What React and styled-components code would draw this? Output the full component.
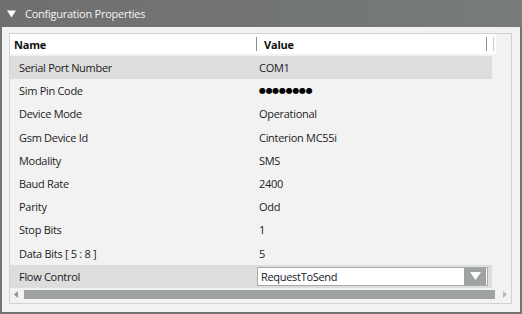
import React from 'react';
import styled, { createGlobalStyle } from 'styled-components';

const GlobalStyle = createGlobalStyle`
   html, body {
      margin: 0;
      padding: 0;
      background: #ffffff;
   }
   body {
      font-family: "Open Sans", "Noto Sans", sans-serif;
   }
`;

const properties = [
   { name: 'Serial Port Number', value: 'COM1', selected: true },
   { name: 'Sim Pin Code', value: '●●●●●●●●', secret: true },
   { name: 'Device Mode', value: 'Operational' },
   { name: 'Gsm Device Id', value: 'Cinterion MC55i' },
   { name: 'Modality', value: 'SMS' },
   { name: 'Baud Rate', value: '2400' },
   { name: 'Parity', value: 'Odd' },
   { name: 'Stop Bits', value: '1' },
   { name: 'Data Bits [ 5 : 8 ]', value: '5' },
   { name: 'Flow Control', value: 'RequestToSend', selected: true, combo: true },
];

const App = () => {
   return (
      <>
         <GlobalStyle />
         <Window>
            <TitleBar>
               <Caret viewBox="0 0 10 8">
                  <path d="M0 0 H10 L5 8 Z" fill="#ffffff" />
               </Caret>
               <Title>Configuration Properties</Title>
            </TitleBar>

            <Body>
               <Panel>
                  <HeaderRow>
                     <HeaderCell width="246px" pad="4px">Name</HeaderCell>
                     <Divider />
                     <HeaderCell width="229px" pad="7px">Value</HeaderCell>
                     <Divider />
                     <HeaderGap />
                     <Divider light />
                  </HeaderRow>

                  <Rows>
                     {properties.map((p) => (
                        <Row key={p.name} selected={p.selected}>
                           <NameCell>{p.name}</NameCell>
                           <ValueCell secret={p.secret}>
                              {p.combo ? (
                                 <Combo>
                                    <ComboText>{p.value}</ComboText>
                                    <ComboButton>
                                       <svg width="11" height="8" viewBox="0 0 11 8">
                                          <path d="M0 0 H11 L5.5 8 Z" fill="#ffffff" />
                                       </svg>
                                    </ComboButton>
                                 </Combo>
                              ) : (
                                 p.value
                              )}
                           </ValueCell>
                        </Row>
                     ))}
                  </Rows>

                  <ScrollBar>
                     <Arrow viewBox="0 0 4 7">
                        <path d="M4 0 V7 L0 3.5 Z" fill="#8f9394" />
                     </Arrow>
                     <Thumb />
                     <Arrow viewBox="0 0 4 7">
                        <path d="M0 0 V7 L4 3.5 Z" fill="#b4b7b8" />
                     </Arrow>
                  </ScrollBar>
               </Panel>
            </Body>
         </Window>
      </>
   );
};

export default App;

const Window = styled.div`
   width: 522px;
   height: 314px;
   box-sizing: border-box;
   display: flex;
   flex-direction: column;
   background: #f2f2f2;
   border: 2px solid #727474;
   border-top: none;
`;

const TitleBar = styled.div`
   height: 27px;
   margin: 0 -2px;
   flex-shrink: 0;
   display: flex;
   align-items: center;
   padding-left: 7px;
   gap: 9px;
   background: linear-gradient(to right, #6f6f6f, #777b7b);
`;

const Caret = styled.svg`
   width: 9px;
   height: 8px;
`;

const Title = styled.span`
   color: #f4f4f4;
   font-size: 11px;
   letter-spacing: -0.25px;
`;

const Body = styled.div`
   flex: 1;
   padding: 6px 8px 7px 7px;
`;

const Panel = styled.div`
   height: 271px;
   box-sizing: border-box;
   border: 1px solid #d3d3d3;
   display: flex;
   flex-direction: column;
`;

const HeaderRow = styled.div`
   width: 486px;
   height: 20px;
   flex-shrink: 0;
   background: #ffffff;
   display: flex;
   align-items: center;
`;

const HeaderCell = styled.div`
   width: ${(p) => p.width};
   padding-left: ${(p) => p.pad};
   box-sizing: border-box;
   font-size: 11px;
   font-weight: 700;
   letter-spacing: -0.2px;
   color: #111111;
`;

const Divider = styled.div`
   width: 1px;
   height: 14px;
   background: ${(p) => (p.light ? '#c8c8c8' : '#8c8c8c')};
`;

const HeaderGap = styled.div`
   width: 6px;
`;

const Rows = styled.div`
   margin-top: 2px;
   width: 482px;
   display: flex;
   flex-direction: column;
`;

const Row = styled.div`
   height: 23.2px;
   display: grid;
   grid-template-columns: 247px 1fr;
   align-items: center;
   background: ${(p) => (p.selected ? '#dddddd' : 'transparent')};
   font-size: 11px;
   letter-spacing: -0.3px;
   color: #1c1c1c;
`;

const NameCell = styled.div`
   padding-left: 9px;
`;

const ValueCell = styled.div`
   padding-left: 2px;
   font-family: ${(p) => (p.secret ? '"DejaVu Sans", sans-serif' : 'inherit')};
   font-size: ${(p) => (p.secret ? '8px' : '11px')};
   letter-spacing: ${(p) => (p.secret ? '-0.3px' : '-0.3px')};
   color: ${(p) => (p.secret ? '#000000' : '#1c1c1c')};
`;

const Combo = styled.div`
   margin-left: -2px;
   width: 231px;
   height: 19px;
   box-sizing: border-box;
   border: 1px solid #a9abab;
   background: #ffffff;
   display: flex;
   align-items: center;
`;

const ComboText = styled.span`
   flex: 1;
   padding-left: 3px;
   color: #101828;
`;

const ComboButton = styled.div`
   width: 22px;
   height: 17px;
   margin-right: 1px;
   background: #9ea2a3;
   display: flex;
   align-items: center;
   justify-content: center;
`;

const ScrollBar = styled.div`
   margin-top: 2px;
   height: 9px;
   display: flex;
   align-items: center;
   padding: 0 4px;
   gap: 6px;
`;

const Arrow = styled.svg`
   width: 4px;
   height: 7px;
   flex-shrink: 0;
`;

const Thumb = styled.div`
   flex: 1;
   height: 9px;
   background: #9ea2a3;
   margin-right: 2px;
`;
